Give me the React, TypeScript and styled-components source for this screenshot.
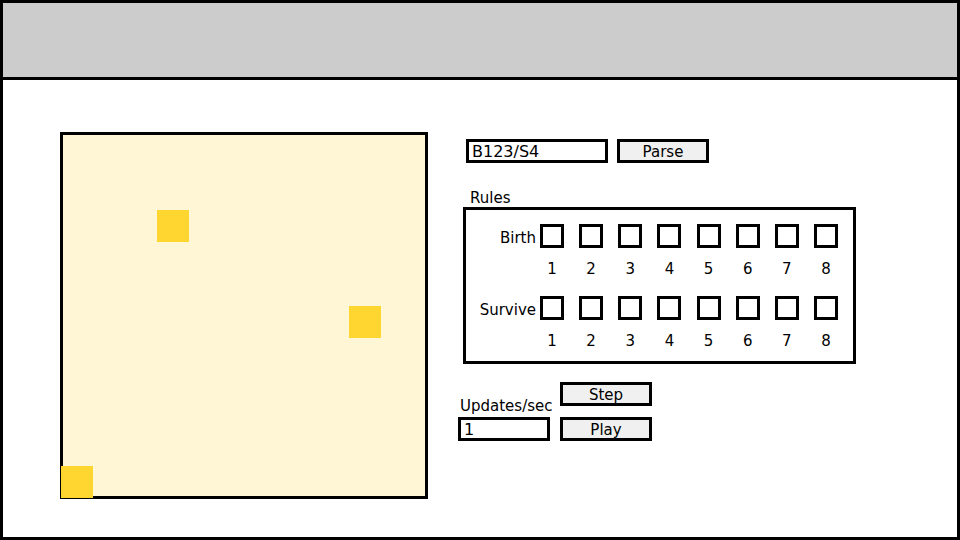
import React from 'react';
import styled, { createGlobalStyle } from 'styled-components';

const GlobalStyle = createGlobalStyle`
  html, body { margin: 0; padding: 0; background: #fff; }
  body { font-family: "DejaVu Sans", "Noto Sans", sans-serif; font-size: 15px; color: #000; }
`;

const Frame = styled.div`
  width: 960px;
  height: 540px;
  box-sizing: border-box;
  border: 3px solid #000;
  display: flex;
  flex-direction: column;
  overflow: hidden;
  background: #fff;
`;

const Header = styled.header`
  flex: none;
  height: 74px;
  background: #cccccc;
  border-bottom: 3px solid #000;
`;

const Main = styled.main`
  flex: 1;
  display: flex;
  align-items: flex-start;
  padding: 52px 0 0 57px;
`;

const Board = styled.div`
  position: relative;
  flex: none;
  width: 368px;
  height: 367px;
  box-sizing: border-box;
  border: 3px solid #000;
  background: #fff6d6;
`;

const Cell = styled.div<{ $x: number; $y: number }>`
  position: absolute;
  width: 32px;
  height: 32px;
  background: #ffd630;
  left: ${(p) => p.$x}px;
  top: ${(p) => p.$y}px;
`;

const Panel = styled.section`
  display: flex;
  flex-direction: column;
  margin: 7px 0 0 30px;
`;

const ParseRow = styled.div`
  display: flex;
  gap: 9px;
  margin-left: 8px;
`;

const TextField = styled.input<{ $w: number }>`
  width: ${(p) => p.$w}px;
  height: 24px;
  box-sizing: border-box;
  margin: 0;
  padding: 1px 0 0 3px;
  border: 3px solid #000;
  border-radius: 0;
  background: #fff;
  color: #000;
  font: 16px "DejaVu Sans", sans-serif;
  outline: none;
`;

const Button = styled.button`
  width: 92px;
  height: 24px;
  box-sizing: border-box;
  margin: 0;
  padding: 2px 0 0;
  border: 3px solid #000;
  border-radius: 0;
  background: #f0f0f0;
  color: #000;
  font: 15px "DejaVu Sans", sans-serif;
  line-height: 1;
`;

const SectionLabel = styled.div`
  margin: 26px 0 0 12px;
  line-height: 18px;
`;

const RulesBox = styled.div`
  width: 393px;
  height: 157px;
  box-sizing: border-box;
  margin-left: 5px;
  border: 3px solid #000;
  padding-top: 14px;
  display: flex;
  flex-direction: column;
`;

const RuleRow = styled.div<{ $gap: number }>`
  display: flex;
  align-items: center;
  height: 24px;
  margin-top: ${(p) => p.$gap}px;
`;

const RowLabel = styled.span`
  width: 70px;
  margin: 4px 4px 0 0;
  text-align: right;
  line-height: 18px;
`;

const Boxes = styled.div`
  display: flex;
  gap: 15.15px;
`;

const Check = styled.input`
  appearance: none;
  width: 24px;
  height: 24px;
  box-sizing: border-box;
  margin: 0;
  border: 3px solid #000;
  border-radius: 0;
  background: #fff;
`;

const NumberRow = styled.div`
  display: flex;
  gap: 15.15px;
  margin: 12px 0 0 74px;
`;

const Num = styled.span`
  width: 24px;
  text-align: center;
  line-height: 18px;
`;

const BottomRow = styled.div`
  display: flex;
  align-items: flex-end;
  gap: 10px;
  margin-top: 18px;
`;

const SpeedColumn = styled.div`
  width: 92px;
  display: flex;
  flex-direction: column;
`;

const SpeedLabel = styled.label`
  white-space: nowrap;
  line-height: 18px;
  margin: 0 0 2px 2px;
`;

const ButtonColumn = styled.div`
  display: flex;
  flex-direction: column;
  gap: 11px;
`;

const digits = [1, 2, 3, 4, 5, 6, 7, 8];

const cells = [
  { x: 94, y: 75 },
  { x: 286, y: 171 },
  { x: -2, y: 331 },
];

function RuleSet({ label, gap }: { label: string; gap: number }) {
  return (
    <>
      <RuleRow $gap={gap}>
        <RowLabel>{label}</RowLabel>
        <Boxes>
          {digits.map((d) => (
            <Check key={d} type="checkbox" aria-label={`${label} ${d}`} />
          ))}
        </Boxes>
      </RuleRow>
      <NumberRow>
        {digits.map((d) => (
          <Num key={d}>{d}</Num>
        ))}
      </NumberRow>
    </>
  );
}

export default function App() {
  return (
    <>
      <GlobalStyle />
      <Frame>
        <Header />
        <Main>
          <Board>
            {cells.map((c, i) => (
              <Cell key={i} $x={c.x} $y={c.y} />
            ))}
          </Board>
          <Panel>
            <ParseRow>
              <TextField $w={142} defaultValue="B123/S4" />
              <Button>Parse</Button>
            </ParseRow>
            <SectionLabel>Rules</SectionLabel>
            <RulesBox>
              <RuleSet label="Birth" gap={0} />
              <RuleSet label="Survive" gap={18} />
            </RulesBox>
            <BottomRow>
              <SpeedColumn>
                <SpeedLabel>Updates/sec</SpeedLabel>
                <TextField $w={92} defaultValue="1" />
              </SpeedColumn>
              <ButtonColumn>
                <Button>Step</Button>
                <Button>Play</Button>
              </ButtonColumn>
            </BottomRow>
          </Panel>
        </Main>
      </Frame>
    </>
  );
}
